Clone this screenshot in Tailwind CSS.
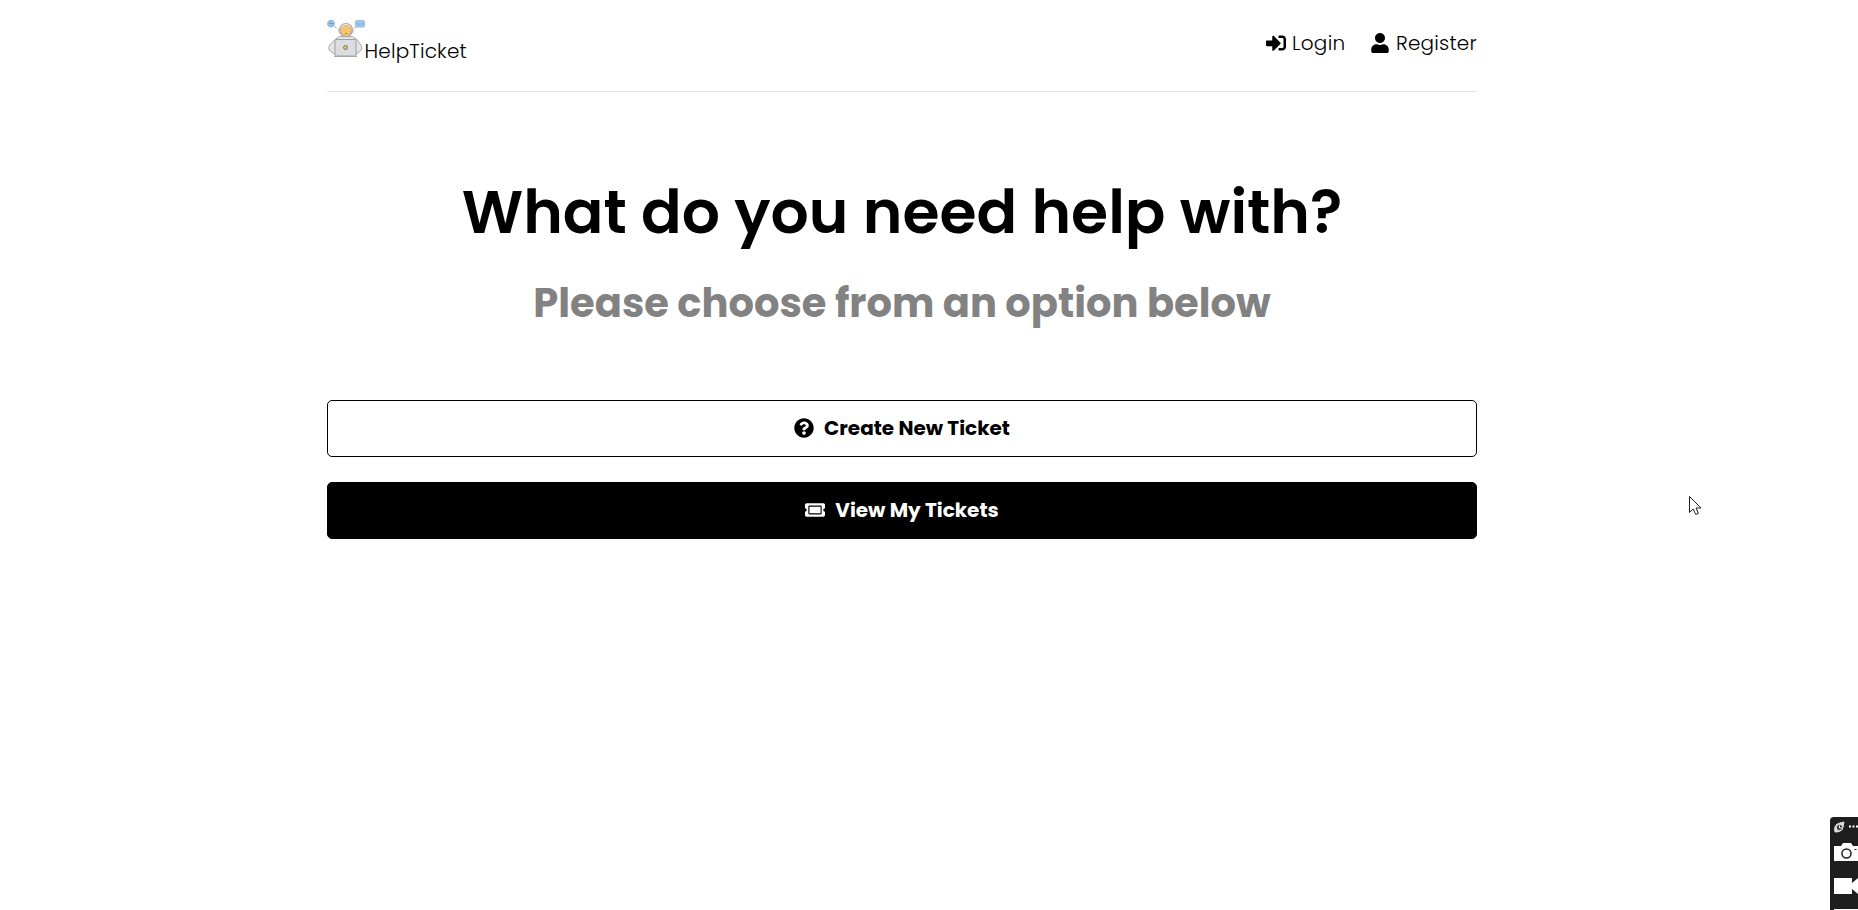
<!DOCTYPE html>
<html lang="en">
<head>
<meta charset="utf-8">
<title>HelpTicket</title>
<script src="https://cdn.jsdelivr.net/npm/@tailwindcss/browser@4"></script>
</head>
<body class="h-[910px] overflow-hidden bg-white font-[Poppins,Inter,sans-serif] text-black">
<div class="mr-auto ml-[327px] flex w-[1150px] flex-col">
  <header class="flex h-[92px] justify-between border-b border-[#e6e6e6]">
    <a class="flex pt-[19px]">
      <svg class="h-[40px] w-[38px] shrink-0" viewBox="0 0 38 40" fill="none">
        <ellipse cx="4" cy="4.7" rx="3.5" ry="3.4" fill="#8cc4f2" stroke="#a9b5c1"/>
        <path d="M2 4.500h4" stroke="#4d8bc4" stroke-dasharray="1 .5"/>
        <path d="m8 7.800 1.500 1.200" stroke="#8c8c96"/>
        <rect x="28.500" y="1.500" width="9" height="6.500" rx="1.500" fill="#93caf6" stroke="#a9b5c1"/>
        <path d="M31 5h1.200m2 0h1.200" stroke="#4d8bc4"/>
        <path d="m29 7.800-1.500 1.200" stroke="#8c8c96"/>
        <circle cx="19" cy="11" r="6.500" stroke="#a3a3ac" stroke-width="1.200"/>
        <circle cx="19" cy="11.700" r="5.400" fill="#f8c56c" stroke="#b39b80" stroke-width=".6"/>
        <path d="M12.500 9.500v4m13-4v4" stroke="#b0b0b9" stroke-width="2"/>
        <path d="M18 14.500h2" stroke="#a47643"/>
        <path d="M8 20.500 12.500 17.500h13l4.500 3 4.500 6.500v4l-5 4H7l-5-4v-4z" fill="#e3e4e6" stroke="#a9a9ae"/>
        <rect x="8" y="20.500" width="21" height="16.500" rx="1" fill="#dcdde0" stroke="#9fa0a5"/>
        <path d="M7 37.500h23" stroke="#a5a6ab"/>
        <circle cx="18.500" cy="28.500" r="2" fill="#f4bd62" stroke="#77747a"/>
      </svg>
      <span class="mt-[17px] -ml-[0.5px] h-[30px] text-[20px] leading-[30px] font-light tracking-[0.18px] whitespace-nowrap">HelpTicket</span>
    </a>
    <nav class="mt-[28px] flex h-[30px] items-center text-[20px] leading-[30px] font-light">
      <a class="mr-[25.500px] flex items-center gap-[6px]">
        <svg class="size-5" viewBox="0 0 512 512"><path d="M416 448h-84c-6.600 0-12-5.400-12-12v-40c0-6.600 5.400-12 12-12h84c17.700 0 32-14.300 32-32V160c0-17.700-14.300-32-32-32h-84c-6.600 0-12-5.400-12-12V76c0-6.600 5.400-12 12-12h84c53 0 96 43 96 96v192c0 53-43 96-96 96zm-47-201L201 79c-15-15-41-4.500-41 17v96H24c-13.300 0-24 10.700-24 24v96c0 13.300 10.700 24 24 24h136v96c0 21.500 26 32 41 17l168-168c9.300-9.400 9.300-24.600 0-34z"/></svg>
        <span class="tracking-[0.3px]">Login</span>
      </a>
      <a class="flex items-center gap-[7px]">
        <svg class="h-5 w-[18px]" viewBox="0 0 448 512"><path d="M224 256c70.700 0 128-57.300 128-128S294.700 0 224 0 96 57.300 96 128s57.300 128 128 128zm89.600 32h-16.700c-22.200 10.200-46.900 16-72.900 16s-50.600-5.800-72.900-16h-16.700C60.200 288 0 348.200 0 422.400V464c0 26.500 21.500 48 48 48h352c26.500 0 48-21.500 48-48v-41.600c0-74.200-60.200-134.400-134.400-134.400z"/></svg>
        <span class="tracking-[0.22px]">Register</span>
      </a>
    </nav>
  </header>
  <section class="flex flex-col items-center pt-[84px] whitespace-nowrap">
    <h1 class="h-[72px] text-[60px] leading-[72px] font-semibold">What do you need help with?</h1>
    <p class="mt-[31px] h-[48px] text-[40px] leading-[48px] font-bold text-[#828282]">Please choose from an option below</p>
  </section>
  <a class="mt-[73px] flex h-[57px] items-center justify-center gap-[10px] rounded-[5px] border border-black pb-px text-[20px] font-bold">
    <svg class="size-5" viewBox="0 0 512 512"><path d="M504 256c0 136.997-111.043 248-248 248S8 392.997 8 256C8 119.083 119.043 8 256 8s248 111.083 248 248zM262.655 90c-54.497 0-89.255 22.957-116.549 63.758-3.536 5.286-2.353 12.415 2.715 16.258l34.699 26.310c5.205 3.947 12.621 3.008 16.665-2.122 17.864-22.658 30.113-35.797 57.303-35.797 20.429 0 45.698 13.148 45.698 32.958 0 14.976-12.363 22.667-32.534 33.976C247.128 238.528 216 254.941 216 296v4c0 6.627 5.373 12 12 12h56c6.627 0 12-5.373 12-12v-1.333c0-28.462 83.186-29.647 83.186-106.667 0-58.002-60.165-102-116.531-102zM256 338c-25.365 0-46 20.635-46 46 0 25.364 20.635 46 46 46s46-20.636 46-46c0-25.365-20.635-46-46-46z"/></svg>
    <span>Create New Ticket</span>
  </a>
  <a class="mt-[25px] flex h-[57px] items-center justify-center gap-[10px] rounded-[5px] border border-black bg-black pb-px text-[20px] font-bold text-white">
    <svg class="size-5" viewBox="0 0 576 512" fill="#fff"><path d="M128 160h320v192H128V160zm400 96c0 26.510 21.490 48 48 48v96c0 26.510-21.490 48-48 48H48c-26.510 0-48-21.490-48-48v-96c26.510 0 48-21.490 48-48s-21.490-48-48-48v-96c0-26.510 21.490-48 48-48h480c26.510 0 48 21.490 48 48v96c-26.510 0-48 21.490-48 48zm-48-104c0-13.255-10.745-24-24-24H120c-13.255 0-24 10.745-24 24v208c0 13.255 10.745 24 24 24h336c13.255 0 24-10.745 24-24V152z"/></svg>
    <span>View My Tickets</span>
  </a>
</div>
<svg class="absolute top-[495px] left-[1688px] h-[22px] w-[14px]" viewBox="0 0 14 22"><path d="M1.500 1.500v16l3.700-3.500 2.500 5.500 2.700-1.200L8 13h5z" fill="#fff" stroke="#222"/></svg>
<aside class="absolute top-[817px] left-[1830px] h-[93px] w-[28px] overflow-hidden rounded-tl-[4px] bg-[#1e1e1e]">
  <svg class="h-[93px] w-[28px]" viewBox="0 0 28 93" fill="none">
    <path d="M5 15c-1-4 0-8 5-9l4-1-1 5c-1 4-4 5-8 5z" fill="#ddd" stroke="#ddd"/>
    <circle cx="9.500" cy="10.500" r="3.200" fill="#333" stroke="#eee"/><path d="M9.500 8.500v2.500h2.500" stroke="#fff"/>
    <path d="M19 9.500h2m1.500 0h2m1.500 0h2" stroke="#fff" stroke-width="2"/>
    <path d="M4 29h7l2-3h8l2 3h5v15H4z" fill="#fff"/>
    <circle cx="16.500" cy="36.500" r="4.500" stroke="#1e1e1e" stroke-width="1.500"/><path d="M24.500 32.500h2" stroke="#1e1e1e"/>
    <path d="M4 61h18v5l6-5v16l-6-5v5H4zM4 92h24v1H4z" fill="#fff"/>
  </svg>
</aside>
</body>
</html>
